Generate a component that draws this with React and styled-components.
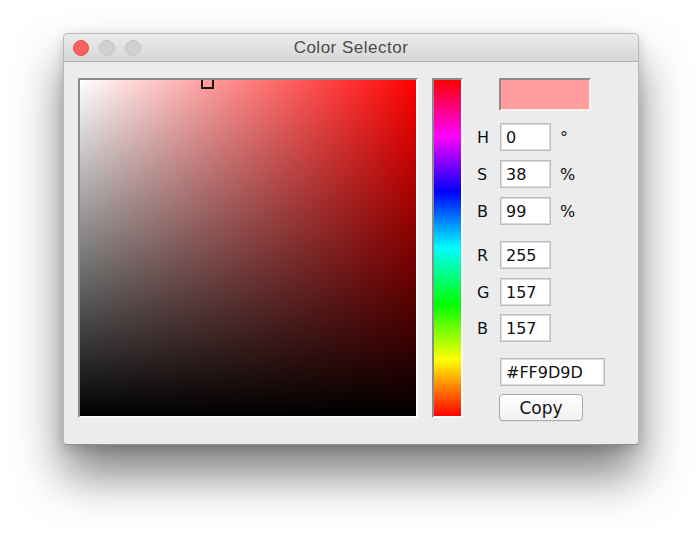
import React from "react";
import styled, { createGlobalStyle } from "styled-components";

const Global = createGlobalStyle`
  html, body { margin: 0; padding: 0; background: #ffffff; }
  body { width: 700px; height: 541px; overflow: hidden; font-family: "DejaVu Sans", sans-serif; }
`;

const Page = styled.div`
  padding: 33px 0 0 63px;
`;

const Window = styled.div`
  box-sizing: border-box;
  width: 576px;
  height: 412px;
  border: 1px solid #b9b9b9;
  border-bottom-color: #8e8e8e;
  border-radius: 5px 5px 4px 4px;
  background: #ececec;
  box-shadow: 0 30px 48px rgba(0, 0, 0, 0.5), 0 4px 12px rgba(0, 0, 0, 0.15);
  display: flex;
  flex-direction: column;
  overflow: hidden;
`;

const TitleBar = styled.div`
  height: 27px;
  flex: none;
  display: flex;
  align-items: center;
  padding-left: 9px;
  position: relative;
  background: linear-gradient(to bottom, #ececec, #d6d6d6);
  border-bottom: 1px solid #b3b3b3;
`;

const Lights = styled.div`
  display: flex;
  gap: 10px;
  margin-top: 1px;
`;

const Light = styled.span`
  box-sizing: border-box;
  width: 16px;
  height: 16px;
  border-radius: 50%;
  background: ${(p) => (p.$red ? "#fc605c" : "#d1d1d1")};
  border: 1px solid ${(p) => (p.$red ? "#e04e4a" : "#c2c2c2")};
`;

const Title = styled.div`
  position: absolute;
  left: 0;
  right: 0;
  top: 0;
  bottom: 0;
  display: flex;
  align-items: center;
  justify-content: center;
  font-family: "Liberation Sans", Arial, sans-serif;
  font-size: 17px;
  letter-spacing: 0.5px;
  color: #4b4b4b;
  pointer-events: none;
`;

const Content = styled.div`
  display: flex;
  align-items: flex-start;
  padding: 16px 0 0 14px;
`;

const Bevel = styled.div`
  box-sizing: border-box;
  border: 2px solid;
  border-color: #8b8b8b #fafafa #fafafa #8b8b8b;
`;

const SquareFrame = styled(Bevel)`
  width: 340px;
  height: 340px;
  position: relative;
  overflow: hidden;
  background: linear-gradient(to top, #000 0%, rgba(0, 0, 0, 0) 100%),
    linear-gradient(to right, #fff 0%, #f00 100%);
`;

const Marker = styled.div`
  position: absolute;
  box-sizing: border-box;
  width: 13px;
  height: 12px;
  border: 2px solid #1c1010;
`;

const HueBar = styled(Bevel)`
  width: 31px;
  height: 340px;
  margin-left: 14px;
  background: linear-gradient(
    to bottom,
    #f00 0%,
    #f0f 16.66%,
    #00f 33.33%,
    #0ff 50%,
    #0f0 66.66%,
    #ff0 83.33%,
    #f00 100%
  );
`;

const Side = styled.div`
  margin-left: 14px;
  display: flex;
  flex-direction: column;
`;

const Swatch = styled(Bevel)`
  width: 92px;
  height: 33px;
  margin-left: 22px;
  background: #ff9d9d;
  border-color: #8b8b8b #fff0f0 #fff0f0 #8b8b8b;
`;

const Row = styled.div`
  display: flex;
  align-items: center;
  height: 28px;
  margin-top: ${(p) => p.$gap}px;
`;

const Label = styled.span`
  width: 23px;
  font-size: 16px;
  color: #111;
`;

const Field = styled.div`
  box-sizing: border-box;
  width: ${(p) => p.$w}px;
  height: 28px;
  background: #fff;
  border: 1px solid #bcbcbc;
  box-shadow: inset 0 0 0 1px #dcdcdc;
  padding-left: 5px;
  display: flex;
  align-items: center;
  font-size: 16px;
  color: #111;
`;

const Unit = styled.span`
  margin-left: 9px;
  font-size: 16px;
  color: #111;
`;

const CopyButton = styled.button`
  box-sizing: border-box;
  margin-top: 8px;
  margin-left: 22px;
  width: 84px;
  height: 27px;
  border: 1px solid #a9a9a9;
  border-radius: 4px;
  background: linear-gradient(to bottom, #ffffff, #f1f1f1);
  box-shadow: 0 1px 0 rgba(0, 0, 0, 0.05);
  font-family: "DejaVu Sans", sans-serif;
  font-size: 17px;
  color: #111;
  padding: 0;
  display: flex;
  align-items: center;
  justify-content: center;
`;

const hsb = [
  { l: "H", v: "0", u: "°", gap: 12 },
  { l: "S", v: "38", u: "%", gap: 9 },
  { l: "B", v: "99", u: "%", gap: 9 },
];
const rgb = [
  { l: "R", v: "255", gap: 16 },
  { l: "G", v: "157", gap: 9 },
  { l: "B", v: "157", gap: 8 },
];

export default function App() {
  return (
    <>
      <Global />
      <Page>
        <Window>
          <TitleBar>
            <Lights>
              <Light $red />
              <Light />
              <Light />
            </Lights>
            <Title>Color Selector</Title>
          </TitleBar>
          <Content>
            <SquareFrame>
              <Marker style={{ left: 0.38 * 336 - 6.5, top: 0.01 * 336 - 6 }} />
            </SquareFrame>
            <HueBar />
            <Side>
              <Swatch />
              {hsb.map((r) => (
                <Row key={r.l + r.v} $gap={r.gap}>
                  <Label>{r.l}</Label>
                  <Field $w={51}>{r.v}</Field>
                  <Unit>{r.u}</Unit>
                </Row>
              ))}
              {rgb.map((r) => (
                <Row key={r.l + r.v} $gap={r.gap}>
                  <Label>{r.l}</Label>
                  <Field $w={51}>{r.v}</Field>
                </Row>
              ))}
              <Row $gap={16}>
                <Label />
                <Field $w={105}>#FF9D9D</Field>
              </Row>
              <CopyButton>Copy</CopyButton>
            </Side>
          </Content>
        </Window>
      </Page>
    </>
  );
}
